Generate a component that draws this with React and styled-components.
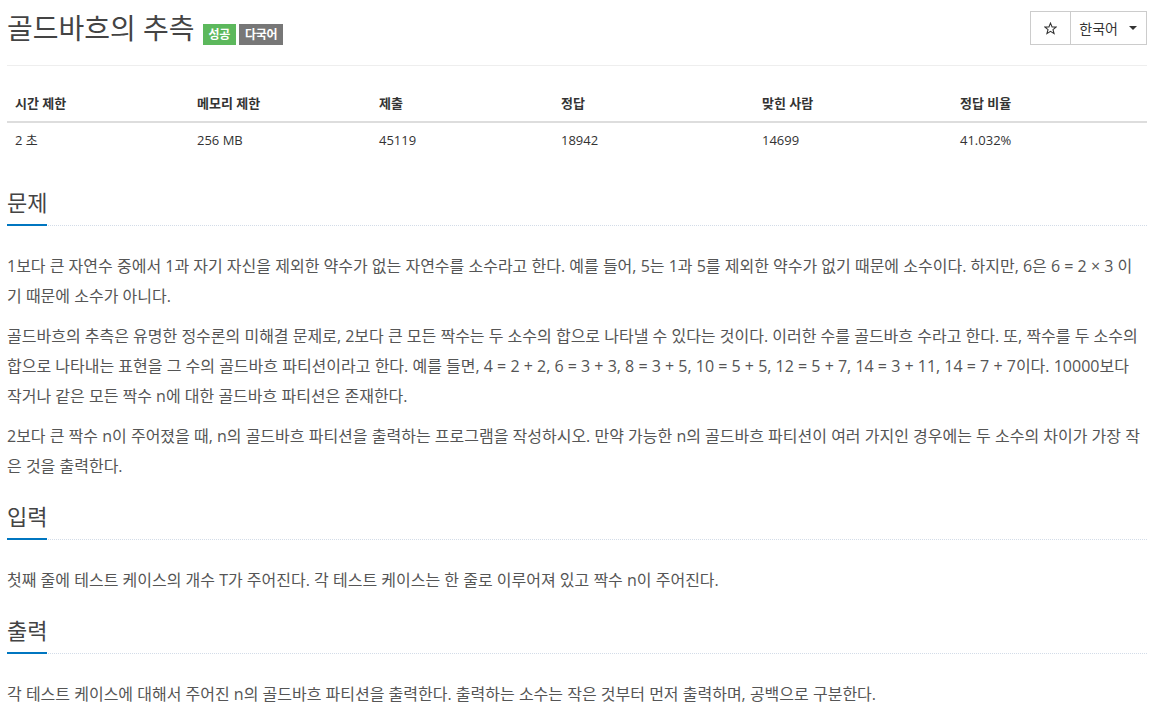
import styled, { createGlobalStyle } from "styled-components";

const GlobalStyle = createGlobalStyle`
  html, body {
    margin: 0;
    padding: 0;
    background: #fff;
    overflow: hidden;
  }
  body {
    font-family: "Open Sans", "Noto Sans CJK KR", sans-serif;
    color: #555;
    font-size: 14px;
  }
`;

const Page = styled.div`
  width: 1140px;
  padding: 0 15px 0 7px;
`;

const Header = styled.div`
  display: flex;
  justify-content: space-between;
  align-items: flex-start;
  padding: 11px 0 20px;
  border-bottom: 1px solid #eee;
`;

const Title = styled.h1`
  display: flex;
  align-items: flex-start;
  margin: 3px 0 0;
  font-size: 28px;
  font-weight: 400;
  line-height: 29px;
  color: #444;
`;

const Badges = styled.span`
  display: flex;
  gap: 3px;
  margin: 10px 0 0 8px;
`;

const Badge = styled.span`
  display: block;
  padding: 5px 6px 4px;
  font-size: 12px;
  line-height: 12px;
  font-weight: 700;
  letter-spacing: -0.3px;
  color: #fff;
  background: ${(p) => p.$color};
`;

const ButtonGroup = styled.div`
  display: flex;
  border: 1px solid #ccc;
`;

const Button = styled.button`
  display: flex;
  align-items: center;
  gap: 11px;
  height: 32px;
  padding: ${(p) => (p.$first ? "0 13px" : "0 9px 0 8px")};
  border: 0;
  border-left: ${(p) => (p.$first ? "0" : "1px solid #ccc")};
  background: #fff;
  font-family: inherit;
  font-size: 14px;
  color: #333;
`;

const Caret = styled.span`
  width: 0;
  height: 0;
  border-top: 4px solid #333;
  border-left: 4px solid transparent;
  border-right: 4px solid transparent;
`;

const Table = styled.div`
  display: grid;
  grid-template-columns: 182px 182px 182px 201px 198px 1fr;
  margin: 20px 0;
  font-size: 13px;
  line-height: 18.6px;
  color: #333;
`;

const HeadCell = styled.div`
  padding: 8px;
  font-weight: 700;
  border-bottom: 2px solid #ddd;
`;

const Cell = styled.div`
  padding: 8px;
`;

const Headline = styled.div`
  padding-top: 14px;
  margin-bottom: 25px;
  border-bottom: 1px dotted #d3dce8;
`;

const HeadlineTitle = styled.h2`
  display: inline-block;
  margin: 0 0 -1px;
  padding-bottom: 10px;
  font-size: 22px;
  font-weight: 400;
  line-height: 23px;
  color: #444;
  border-bottom: 2px solid #0076c0;
`;

const Paragraph = styled.p`
  margin: 0 0 10px;
  padding-right: 4px;
  font-size: 16px;
  line-height: 30px;
  color: #555;
`;

const StarIcon = () => (
  <svg width="13" height="13" viewBox="0 0 24 24" fill="none" stroke="#333" strokeWidth="2" strokeLinejoin="miter">
    <polygon points="12,2 14.9,9 22.5,9.3 16.6,14.1 18.6,21.5 12,17.3 5.4,21.5 7.4,14.1 1.5,9.3 9.1,9" />
  </svg>
);

const stats = [
  ["시간 제한", "2 초"],
  ["메모리 제한", "256 MB"],
  ["제출", "45119"],
  ["정답", "18942"],
  ["맞힌 사람", "14699"],
  ["정답 비율", "41.032%"],
];

const sections = [
  {
    title: "문제",
    paragraphs: [
      "1보다 큰 자연수 중에서  1과 자기 자신을 제외한 약수가 없는 자연수를 소수라고 한다. 예를 들어, 5는 1과 5를 제외한 약수가 없기 때문에 소수이다. 하지만, 6은 6 = 2 × 3 이기 때문에 소수가 아니다.",
      "골드바흐의 추측은 유명한 정수론의 미해결 문제로, 2보다 큰 모든 짝수는 두 소수의 합으로 나타낼 수 있다는 것이다. 이러한 수를 골드바흐 수라고 한다. 또, 짝수를 두 소수의 합으로 나타내는 표현을 그 수의 골드바흐 파티션이라고 한다. 예를 들면, 4 = 2 + 2, 6 = 3 + 3, 8 = 3 + 5, 10 = 5 + 5, 12 = 5 + 7, 14 = 3 + 11, 14 = 7 + 7이다. 10000보다 작거나 같은 모든 짝수 n에 대한 골드바흐 파티션은 존재한다.",
      "2보다 큰 짝수 n이 주어졌을 때, n의 골드바흐 파티션을 출력하는 프로그램을 작성하시오. 만약 가능한 n의 골드바흐 파티션이 여러 가지인 경우에는 두 소수의 차이가 가장 작은 것을 출력한다.",
    ],
  },
  {
    title: "입력",
    paragraphs: ["첫째 줄에 테스트 케이스의 개수 T가 주어진다. 각 테스트 케이스는 한 줄로 이루어져 있고 짝수 n이 주어진다."],
  },
  {
    title: "출력",
    paragraphs: ["각 테스트 케이스에 대해서 주어진 n의 골드바흐 파티션을 출력한다. 출력하는 소수는 작은 것부터 먼저 출력하며, 공백으로 구분한다."],
  },
];

export default function App() {
  return (
    <>
      <GlobalStyle />
      <Page>
        <Header>
          <Title>
            골드바흐의 추측
            <Badges>
              <Badge $color="#5cb85c">성공</Badge>
              <Badge $color="#777">다국어</Badge>
            </Badges>
          </Title>
          <ButtonGroup>
            <Button $first>
              <StarIcon />
            </Button>
            <Button>
              한국어
              <Caret />
            </Button>
          </ButtonGroup>
        </Header>

        <Table>
          {stats.map(([label]) => (
            <HeadCell key={label}>{label}</HeadCell>
          ))}
          {stats.map(([label, value]) => (
            <Cell key={label}>{value}</Cell>
          ))}
        </Table>

        {sections.map((section) => (
          <section key={section.title}>
            <Headline>
              <HeadlineTitle>{section.title}</HeadlineTitle>
            </Headline>
            {section.paragraphs.map((text, i) => (
              <Paragraph key={i}>{text}</Paragraph>
            ))}
          </section>
        ))}
      </Page>
    </>
  );
}
